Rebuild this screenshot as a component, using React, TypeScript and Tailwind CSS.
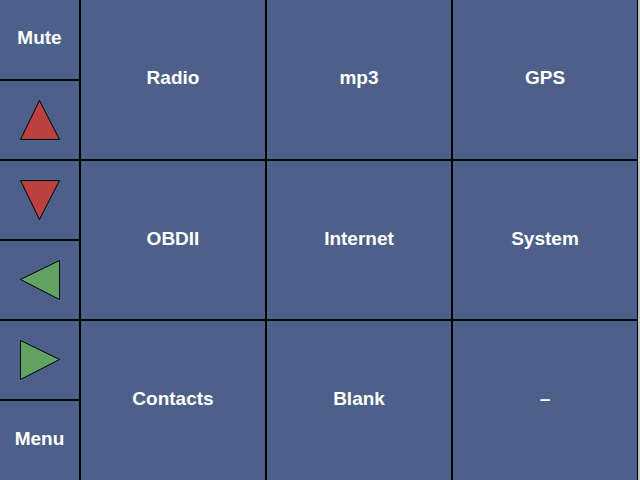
import React from 'react';

// Side column: text buttons and arrow buttons
type Arrow = 'up' | 'down' | 'left' | 'right';

const arrowPoints: Record<Arrow, string> = {
  up: '19.5,0.5 39.5,39.5 0.5,39.5',
  down: '0.5,0.5 39.5,0.5 19.5,39.5',
  left: '0.5,19.5 39.5,0.5 39.5,39.5',
  right: '0.5,0.5 39.5,19.5 0.5,39.5',
};

const arrowFill: Record<Arrow, string> = {
  up: '#bb4040',
  down: '#bb4040',
  left: '#62a262',
  right: '#62a262',
};

function ArrowIcon({ dir }: { dir: Arrow }) {
  return (
    <svg width="40" height="40" viewBox="0 0 40 40">
      <polygon points={arrowPoints[dir]} fill={arrowFill[dir]} stroke="#000" strokeWidth="1" />
    </svg>
  );
}

const sideItems: Array<{ label?: string; arrow?: Arrow; h: string }> = [
  { label: 'Mute', h: 'h-[79px]' },
  { arrow: 'up', h: 'h-[78px]' },
  { arrow: 'down', h: 'h-[78px]' },
  { arrow: 'left', h: 'h-[78px]' },
  { arrow: 'right', h: 'h-[78px]' },
  { label: 'Menu', h: 'h-[79px]' },
];

const mainItems = ['Radio', 'mp3', 'GPS', 'OBDII', 'Internet', 'System', 'Contacts', 'Blank', '–'];

export default function App() {
  return (
    <div className="w-[640px] h-[480px] bg-[#c4c4c4] flex font-['Liberation_Sans',Arial,sans-serif] font-bold text-[19px] text-white">
      <div className="w-[638px] h-[480px] bg-black flex gap-[2px] pr-px">
        {/* left button column */}
        <div className="w-[79px] flex flex-col gap-[2px]">
          {sideItems.map((item, i) => (
            <div
              key={i}
              className={`${item.h} bg-[#4d6089] flex items-center justify-center ${item.arrow ? '' : 'pb-[2px]'}`}
            >
              {item.arrow ? <ArrowIcon dir={item.arrow} /> : item.label}
            </div>
          ))}
        </div>

        {/* main menu grid */}
        <div className="w-[556px] grid grid-cols-3 grid-rows-[159px_158px_159px] gap-[2px]">
          {mainItems.map((label) => (
            <div key={label} className="bg-[#4d6089] flex items-center justify-center pb-[2px]">
              {label}
            </div>
          ))}
        </div>
      </div>
    </div>
  );
}
